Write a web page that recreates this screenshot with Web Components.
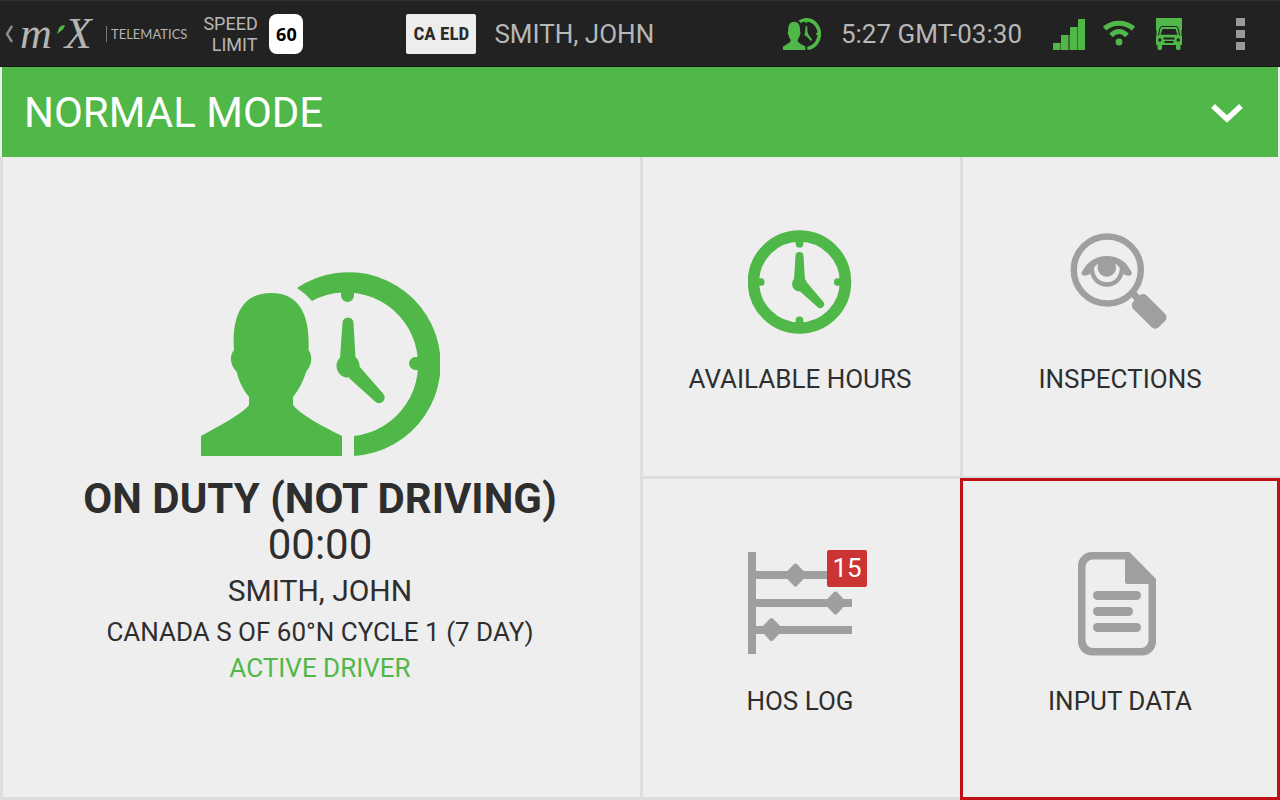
<!DOCTYPE html>
<html lang="en">
<head>
<meta charset="utf-8">
<meta name="viewport" content="width=device-width, initial-scale=1">
<title>Driver terminal</title>
<style>
  html, body { height: 100%; margin: 0; }
  body {
    --green: #50b848;
    --grey: #9f9f9f;
    --tile: #eeeeee;
    --line: #dcdcdc;
    --ink: #2e2e2e;
    --alert: #cc3333;
    background: var(--tile);
    color: var(--ink);
    font-family: Roboto, "Liberation Sans", sans-serif;
  }
</style>
</head>
<body>
<eld-app></eld-app>

<script>
(function () {
  'use strict';

  const RESET = `
    :host, *, *::before, *::after { box-sizing: border-box; }
    button, a {
      margin: 0; padding: 0; border: 0;
      background: none; color: inherit; font: inherit;
      text-decoration: none; cursor: pointer;
    }
    button:focus-visible, a:focus-visible { outline: 2px solid #2b7de9; outline-offset: -2px; }
    svg { display: block; }
  `;

  // viewBox + body, fill is always currentColor
  const ICONS = {
    driver: ['0 0 239 184', `
      <path d="M96 16A92 92 0 1 1 153 184V164A72 72 0 1 0 111 29Q104 21 96 16Z"/>
      <rect x="140" y="13" width="13" height="17" rx="6.5"/>
      <rect x="208" y="85" width="20" height="13" rx="6.5"/>
      <circle cx="147" cy="94" r="11.5"/>
      <path d="M141.5 51a5.5 5.5 0 0 1 11 0L154.5 86 139 86Z"/>
      <path d="M158 94L182 121.5a5.5 5.5 0 0 1-8 8L148 106Z"/>
      <path d="M0 164C20 153 41 142 48 133V125C43 119 38 110 35.7 100C29 93 28 84 33 78C31 49 38 21 70 21C102 21 109 49 107.5 78C112 84 111 93 105 100C102 110 97 119 92 125V133C100 143 121 154 141 164V184H0Z"/>`],
    clock: ['0 0 104 104', `
      <circle cx="51.5" cy="52" r="46" fill="none" stroke="currentColor" stroke-width="11.5"/>
      <rect x="47.7" y="7" width="7.6" height="10.5" rx="3.6"/>
      <rect x="47.7" y="86.5" width="7.6" height="10.5" rx="3.6"/>
      <rect x="6" y="48.2" width="10.5" height="7.6" rx="3.6"/>
      <rect x="86" y="48.2" width="10.5" height="7.6" rx="3.6"/>
      <circle cx="51.5" cy="54" r="7.5"/>
      <path d="M47.5 26a4 4 0 0 1 8 0L57 50H46Z"/>
      <path d="M58.5 52L75 71.5a3.8 3.8 0 0 1-5.5 5.5L51 60.5Z"/>`],
    inspect: ['0 0 104 104', `
      <circle cx="39.3" cy="40" r="33.5" fill="none" stroke="currentColor" stroke-width="6.4"/>
      <path d="M61 64L66 59 72 66 67 71Z"/>
      <rect x="63.5" y="72" width="36" height="19" rx="5" transform="rotate(45 81.5 81)"/>
      <path d="M13.8 42C20 31 28 26 38.8 26C50 26 58 31 63.5 42C65 46 60 46.5 56 44.5L53 39 48 34H29.500L24.500 39 21.500 44.500C17 46.500 12 45.500 13.800 42Z"/>
      <circle cx="38.8" cy="37.5" r="9.3"/>
      <path d="M23.8 38C24 60 53.800 60 54 38" fill="none" stroke="currentColor" stroke-width="4.400"/>`],
    log: ['0 0 104 104', `
      <path d="M0 0H8V102H0ZM8 19H104V27H8ZM8 47H104V55H8ZM8 74H104V82H8Z"/>
      <g stroke="currentColor" stroke-width="4" stroke-linejoin="round">
        <path d="M47.5 13.5L56.500 23 47.5 32.5 38.500 23Z"/>
        <path d="M87.5 41.5L96.500 51 87.5 60.5 78.500 51Z"/>
        <path d="M23.5 68L32.500 77.5 23.5 87 14.500 77.5Z"/>
      </g>`],
    document: ['0 0 104 104', `
      <path fill-rule="evenodd" d="M24 0H61.5L88 27V89.5A14 14 0 0 1 74 103.5H24A14 14 0 0 1 10 89.5V14A14 14 0 0 1 24 0ZM25 7.5A7.5 7.5 0 0 0 17.5 15V88.5A7.5 7.5 0 0 0 25 96H73A7.5 7.5 0 0 0 80.5 88.5V32H59A2 2 0 0 1 57 30V7.5Z"/>
      <rect x="25" y="39" width="48" height="9" rx="4.5"/>
      <rect x="25" y="55" width="40" height="9" rx="4.5"/>
      <rect x="25" y="71" width="48" height="9" rx="4.5"/>`],
    signal: ['0 0 32 32', `
      <path d="M7 25H8V32H7ZM15 17H17V32H15ZM24 9H25V32H24Z" opacity=".5"/>
      <path d="M0 25H7V32H0ZM8 17H15V32H8ZM17 9H24V32H17ZM25 1H32V32H25Z"/>`],
    wifi: ['0 0 32 32', `
      <g fill="none" stroke="currentColor" stroke-width="5">
        <path d="M1.5 10.5C10 3.5 22 3.5 30.5 10.5"/>
        <path d="M8 17.5C13 12 19 12 24 17.5"/>
      </g>
      <circle cx="16" cy="24" r="3.4"/>`],
    bus: ['0 0 26 32', `
      <path d="M0 0H26V27H24.5V30A2 2 0 0 1 20 30V27H6V30A2 2 0 0 1 1.5 30V27H0Z"/>
      <g fill="none" stroke="#222" stroke-width="1">
        <path d="M2.5 17.5L4 10Q4.5 8.5 6 8.5H20Q21.5 8.5 22 10L23.5 17.5"/>
        <path d="M0 12V18M26 12V18"/>
      </g>
      <path fill="#222" d="M6.5 11H19.5L21.5 16.8H4.5ZM7.5 19.5H18.5V21.5H7.5ZM8.5 23H17.5V25H8.5Z"/>
      <circle cx="3.8" cy="22" r="1.7" fill="#222"/>
      <circle cx="22.2" cy="22" r="1.7" fill="#222"/>`],
    menu: ['0 0 9 32', '<path d="M0 0H9V8H0ZM0 12H9V20H0ZM0 24H9V32H0Z"/>'],
    back: ['0 0 8 18', '<path d="M7 1L2 9 7 17" fill="none" stroke="currentColor" stroke-width="2.4"/>'],
    down: ['0 0 32 20', '<path d="M2 3L16 16 30 3" fill="none" stroke="currentColor" stroke-width="5.5"/>']
  };

  function define(name, html, setup) {
    const template = document.createElement('template');
    template.innerHTML = html;
    customElements.define(name, class extends HTMLElement {
      constructor() {
        super();
        this.attachShadow({ mode: 'open' }).append(template.content.cloneNode(true));
      }
      connectedCallback() { if (setup) setup(this, this.shadowRoot); }
    });
  }

  define('eld-icon', `
    <style>
      :host { display: block; flex: none; }
      svg { display: block; width: 100%; height: 100%; }
    </style>
    <svg fill="currentColor" preserveAspectRatio="none" aria-hidden="true"></svg>
  `, (host, root) => {
    const icon = ICONS[host.getAttribute('name')];
    if (!icon) return;
    const svg = root.querySelector('svg');
    svg.setAttribute('viewBox', icon[0]);
    svg.innerHTML = icon[1];
  });

  define('mix-logo', `
    <style>
      :host { display: flex; align-items: center; color: #b4b4b4; }
      .mark {
        display: flex;
        width: 76px;
        font: italic 44px/44px "Liberation Serif", serif;
      }
      svg { margin: 13px 0 0 5px; color: var(--green); }
      .name {
        margin-left: 10px;
        padding-left: 4px;
        border-left: 1px solid #777;
        font: 13px/16px Lato, sans-serif;
      }
    </style>
    <span class="mark">
      <span>m</span>
      <svg width="8" height="9" viewBox="0 0 8 9" aria-hidden="true"><path fill="currentColor" d="M0 9L2 3Q4 0 8 0Q7 4 4 6Z"/></svg>
      <span>X</span>
    </span>
    <span class="name">TELEMATICS</span>
  `);

  define('status-bar', `
    <style>
      ${RESET}
      :host {
        display: flex;
        align-items: center;
        height: 67px;
        padding: 0 35px 0 5px;
        background: #222;
        border-top: 1px solid #303030;
        border-bottom: 1px solid #161616;
        color: #b7b7b7;
        font-size: 26px;
        line-height: 32px;
        white-space: nowrap;
      }
      .home { display: flex; align-items: center; gap: 7px; }
      .home eld-icon { width: 8px; height: 18px; color: #8d8d8d; }
      .limit { display: flex; align-items: center; gap: 12px; margin-left: 16px; }
      .limit .text { width: 54px; font-size: 18px; line-height: 21px; text-align: right; white-space: normal; }
      .limit .value {
        width: 34px;
        border-radius: 8px;
        background: #fff;
        color: #000;
        font: bold 18px/40px "Noto Sans", sans-serif;
        text-align: center;
      }
      .user { display: flex; flex: 1; align-items: center; gap: 18px; margin-left: 103px; }
      .rule {
        width: 70px;
        border-radius: 2px;
        background: #ededed;
        color: #2b2b2b;
        font: bold 19px/40px "Liberation Sans Narrow", "Roboto Condensed", Roboto, sans-serif;
        text-align: center;
      }
      .status { display: flex; align-items: center; color: var(--green); }
      .status time { margin: 0 31px 0 20px; color: #b7b7b7; }
      .driver { width: 38px; height: 32px; }
      .sq { width: 32px; height: 32px; }
      .wifi { margin: 0 21px 0 18px; }
      .bus { width: 26px; height: 32px; }
      .menu { margin-left: 54px; color: #999; }
      .menu eld-icon { width: 9px; height: 32px; }
    </style>
    <a class="home" href="#home" aria-label="Back"><eld-icon name="back"></eld-icon><mix-logo></mix-logo></a>
    <div class="limit"><span class="text">SPEED LIMIT</span><span class="value">60</span></div>
    <div class="user"><span class="rule">CA ELD</span><span>SMITH, JOHN</span></div>
    <div class="status">
      <eld-icon class="driver" name="driver"></eld-icon>
      <time>5:27 GMT-03:30</time>
      <eld-icon class="sq" name="signal"></eld-icon>
      <eld-icon class="sq wifi" name="wifi"></eld-icon>
      <eld-icon class="bus" name="bus"></eld-icon>
      <button class="menu" type="button" aria-label="Menu"><eld-icon name="menu"></eld-icon></button>
    </div>
  `);

  define('mode-bar', `
    <style>
      ${RESET}
      :host { display: block; margin: 0 2px; }
      button {
        display: flex;
        align-items: center;
        justify-content: space-between;
        width: 100%;
        height: 90px;
        padding: 2px 35px 0 22px;
        background: var(--green);
        color: #fff;
        font-size: 42px;
        line-height: 48px;
      }
      eld-icon { width: 32px; height: 20px; }
    </style>
    <button type="button" aria-expanded="false"><slot></slot><eld-icon name="down"></eld-icon></button>
  `);

  define('driver-tile', `
    <style>
      ${RESET}
      :host { display: grid; background: var(--tile); }
      button {
        display: flex;
        flex-direction: column;
        align-items: center;
        justify-content: center;
        padding: 4px 3px 0 0;
        font-size: 26px;
        line-height: 36px;
      }
      eld-icon { width: 239px; height: 184px; margin-bottom: 20px; color: var(--green); }
      .duty, .time { font-size: 42px; line-height: 46px; }
      .duty { font-weight: bold; }
      .name { font-size: 30px; line-height: 46px; }
      .state { color: var(--green); }
    </style>
    <button type="button">
      <eld-icon name="driver"></eld-icon>
      <span class="duty"><slot name="duty"></slot></span>
      <span class="time"><slot name="time"></slot></span>
      <span class="name"><slot name="name"></slot></span>
      <span><slot name="cycle"></slot></span>
      <span class="state"><slot name="state"></slot></span>
    </button>
  `);

  define('menu-tile', `
    <style>
      ${RESET}
      :host { position: relative; display: grid; background: var(--tile); color: var(--ink); }
      button {
        display: flex;
        flex-direction: column;
        align-items: center;
        justify-content: center;
        gap: 22px;
        padding-right: 3px;
        font-size: 26px;
        line-height: 46px;
      }
      .icon { position: relative; color: var(--grey); }
      :host([active]) .icon { color: var(--green); }
      .icon > eld-icon { width: 104px; height: 104px; }
      .badge {
        position: absolute;
        top: -2px;
        right: -15px;
        width: 40px;
        border-radius: 2px;
        background: var(--alert);
        color: #fff;
        line-height: 37px;
        text-align: center;
      }
      /* frame sits over the grid lines round the tile */
      :host([selected])::after {
        content: "";
        position: absolute;
        inset: -1px 0 -3px -3px;
        border: 3px solid #bf1016;
        pointer-events: none;
      }
    </style>
    <button type="button">
      <span class="icon"></span>
      <slot></slot>
    </button>
  `, (host, root) => {
    const count = host.getAttribute('count');
    root.querySelector('.icon').innerHTML =
      `<eld-icon name="${host.getAttribute('icon')}"></eld-icon>` +
      (count ? `<span class="badge">${count}</span>` : '');
  });

  define('eld-app', `
    <style>
      :host { display: flex; flex-direction: column; min-height: 100vh; }
      main {
        flex: 1;
        display: grid;
        grid-template-columns: repeat(4, minmax(0, 1fr));
        grid-template-rows: repeat(2, 1fr);
        gap: 3px;
        padding: 0 0 3px 3px;
        background: var(--line);
      }
      driver-tile { grid-column: span 2; grid-row: span 2; }
    </style>
    <status-bar></status-bar>
    <mode-bar>NORMAL MODE</mode-bar>
    <main>
      <driver-tile>
        <span slot="duty">ON DUTY (NOT DRIVING)</span>
        <span slot="time">00:00</span>
        <span slot="name">SMITH, JOHN</span>
        <span slot="cycle">CANADA S OF 60°N CYCLE 1 (7 DAY)</span>
        <span slot="state">ACTIVE DRIVER</span>
      </driver-tile>
      <menu-tile icon="clock" active>AVAILABLE HOURS</menu-tile>
      <menu-tile icon="inspect">INSPECTIONS</menu-tile>
      <menu-tile icon="log" count="15">HOS LOG</menu-tile>
      <menu-tile icon="document" selected>INPUT DATA</menu-tile>
    </main>
  `);
})();
</script>
</body>
</html>
